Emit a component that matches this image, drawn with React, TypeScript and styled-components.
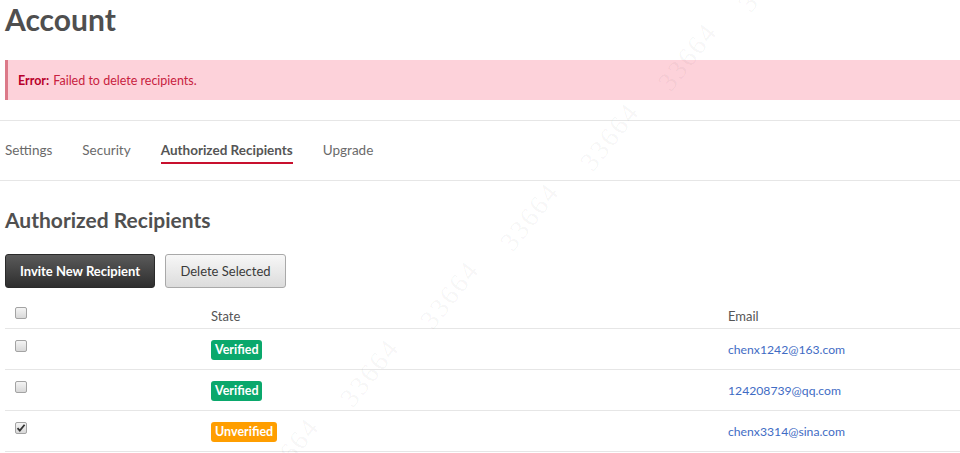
import React from "react";
import styled, { createGlobalStyle } from "styled-components";

const GlobalStyle = createGlobalStyle`
  html, body { margin: 0; padding: 0; background: #fff; }
  body { font-family: Lato, "Noto Sans", sans-serif; color: #555; }
  * { box-sizing: border-box; }
`;

const Page = styled.div`
  position: relative;
  width: 960px;
  height: 453px;
  overflow: hidden;
`;

const Title = styled.h1`
  margin: 0;
  padding-left: 5px;
  font-size: 30px;
  line-height: 38px;
  font-weight: 700;
  color: #4f4f4f;
`;

const Alert = styled.div`
  margin: 22px 0 0 5px;
  height: 40px;
  display: flex;
  align-items: center;
  padding-left: 10px;
  background: #fdd2da;
  border-left: 3px solid #dc7a89;
  font-size: 12.5px;
  color: #c8213e;
`;

const AlertStrong = styled.strong`
  color: #b8002a;
  font-weight: 700;
  margin-right: 4px;
`;

const TabBar = styled.nav`
  margin-top: 20px;
  display: flex;
  gap: 30px;
  padding: 0 0 0 5px;
  height: 61px;
  border-top: 1px solid #e6e6e6;
  border-bottom: 1px solid #e6e6e6;
`;

const Tab = styled.a<{ $active?: boolean }>`
  display: block;
  padding-top: 19px;
  padding-bottom: 2px;
  line-height: 20px;
  font-size: 13.5px;
  text-decoration: none;
  cursor: pointer;
  color: ${(p) => (p.$active ? "#555" : "#6a6a6a")};
  font-weight: ${(p) => (p.$active ? 700 : 400)};
  border-bottom: 2px solid ${(p) => (p.$active ? "#c8102e" : "transparent")};
  height: 43px;
`;

const SectionTitle = styled.h2`
  margin: 0;
  padding: 24px 0 0 5px;
  font-size: 21px;
  line-height: 30px;
  font-weight: 700;
  color: #505050;
  height: 73px;
`;

const Actions = styled.div`
  display: flex;
  gap: 10px;
  padding-left: 5px;
`;

const Button = styled.button<{ $primary?: boolean }>`
  height: 34px;
  padding: 0;
  font-family: inherit;
  font-size: 13px;
  border-radius: 3px;
  white-space: nowrap;
  cursor: pointer;
  ${(p) =>
    p.$primary
      ? `
    color: #fff;
    font-weight: 700;
    border: 1px solid #2a2a2a;
    background: linear-gradient(#5a5a5a, #2e2e2e);
    width: 150px;
  `
      : `
    color: #3a3a3a;
    font-weight: 400;
    border: 1px solid #a9a9a9;
    background: linear-gradient(#f7f7f7, #dcdcdc);
    width: 121px;
  `}
`;

const Table = styled.table`
  margin-left: 5px;
  width: 955px;
  border-collapse: collapse;
  font-size: 13px;
  table-layout: fixed;
`;

const HeadCell = styled.th<{ $w?: number }>`
  text-align: left;
  font-weight: 400;
  color: #555;
  padding: 18px 10px 2px;
  line-height: 20px;
  height: 40px;
  border-bottom: 1px solid #e6e6e6;
  vertical-align: top;
  width: ${(p) => (p.$w ? `${p.$w}px` : "auto")};
`;

const Cell = styled.td`
  padding: 0 10px;
  height: 41px;
  line-height: 20px;
  border-bottom: 1px solid #e6e6e6;
  vertical-align: middle;
`;

const Check = styled.span<{ $lift?: number }>`
  display: block;
  width: 12px;
  height: 12px;
  border: 1px solid #a3a3a3;
  border-radius: 2px;
  background: linear-gradient(#f4f4f4, #d8d8d8);
  position: relative;
  margin-top: ${(p) => -(p.$lift ?? 0)}px;
`;

const Tick = styled.svg`
  position: absolute;
  left: 0;
  top: 0;
`;

const Badge = styled.span<{ $tone: "ok" | "warn" }>`
  display: inline-block;
  height: 20px;
  line-height: 20px;
  padding: 0 4px;
  border-radius: 3px;
  font-size: 12.5px;
  font-weight: 700;
  color: #fff;
  background: ${(p) => (p.$tone === "ok" ? "#0aa86c" : "#ff9e00")};
`;

const EmailLink = styled.a`
  color: #3f6cc4;
  font-size: 12.2px;
  text-decoration: none;
`;

const Watermark = styled.div`
  position: absolute;
  inset: 0;
  pointer-events: none;
  overflow: hidden;
`;

const Mark = styled.span`
  position: absolute;
  font-family: "Liberation Serif", serif;
  font-size: 27px;
  letter-spacing: 2px;
  color: rgba(0, 0, 0, 0.045);
  transform: translate(-50%, -50%) rotate(-52deg);
  white-space: nowrap;
`;

const marks = [
  [768, -22],
  [688, 57],
  [610, 137],
  [530, 217],
  [450, 295],
  [370, 373],
  [290, 452],
];

const rows = [
  { state: "Verified", tone: "ok" as const, email: "chenx1242@163.com", checked: false },
  { state: "Verified", tone: "ok" as const, email: "124208739@qq.com", checked: false },
  { state: "Unverified", tone: "warn" as const, email: "chenx3314@sina.com", checked: true },
];

function Checkbox({ checked, lift }: { checked?: boolean; lift?: number }) {
  return (
    <Check $lift={lift}>
      {checked && (
        <Tick width="10" height="10" viewBox="0 0 10 10">
          <path d="M1.5 5.2 L3.8 7.6 L8.6 1.8" fill="none" stroke="#333" strokeWidth="1.8" />
        </Tick>
      )}
    </Check>
  );
}

export default function App() {
  return (
    <>
      <GlobalStyle />
      <Page>
        <Title>Account</Title>
        <Alert>
          <AlertStrong>Error:</AlertStrong> Failed to delete recipients.
        </Alert>
        <TabBar>
          <Tab>Settings</Tab>
          <Tab>Security</Tab>
          <Tab $active>Authorized Recipients</Tab>
          <Tab>Upgrade</Tab>
        </TabBar>
        <SectionTitle>Authorized Recipients</SectionTitle>
        <Actions>
          <Button $primary>Invite New Recipient</Button>
          <Button>Delete Selected</Button>
        </Actions>
        <Table>
          <thead>
            <tr>
              <HeadCell $w={196}>
                <Checkbox lift={-1} />
              </HeadCell>
              <HeadCell $w={517}>State</HeadCell>
              <HeadCell>Email</HeadCell>
            </tr>
          </thead>
          <tbody>
            {rows.map((r) => (
              <tr key={r.email}>
                <Cell>
                  <Checkbox checked={r.checked} lift={6} />
                </Cell>
                <Cell>
                  <Badge $tone={r.tone}>{r.state}</Badge>
                </Cell>
                <Cell>
                  <EmailLink>{r.email}</EmailLink>
                </Cell>
              </tr>
            ))}
          </tbody>
        </Table>
        <Watermark>
          {marks.map(([x, y]) => (
            <Mark key={`${x}-${y}`} style={{ left: x, top: y }}>
              33664
            </Mark>
          ))}
        </Watermark>
      </Page>
    </>
  );
}
